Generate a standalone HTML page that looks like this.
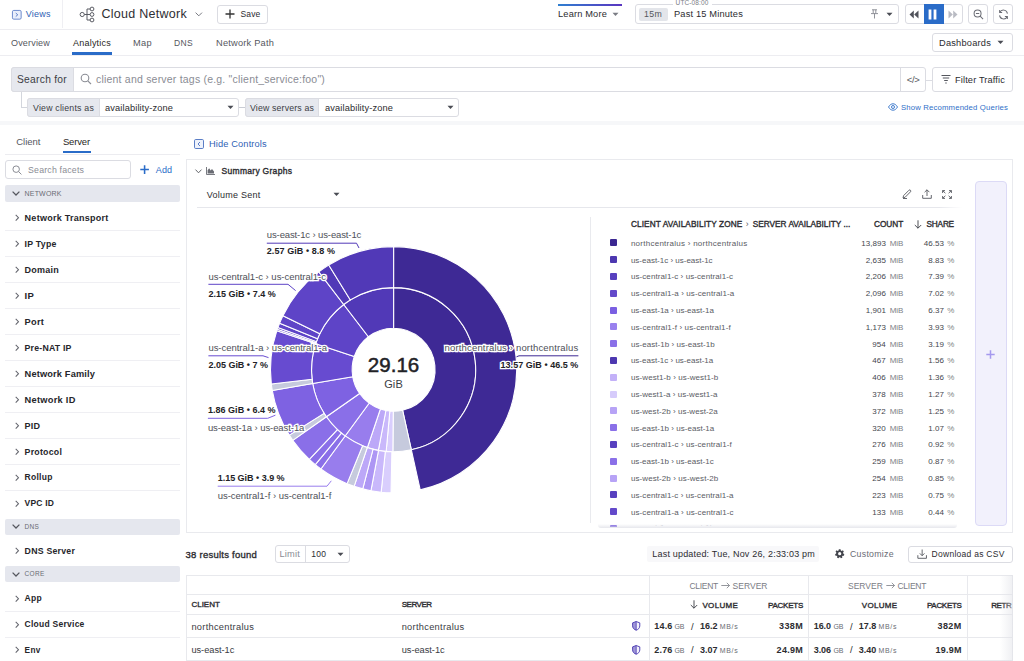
<!DOCTYPE html>
<html lang="en"><head><meta charset="utf-8"><title>Cloud Network - Analytics</title>
<style>
html,body{margin:0;padding:0;}
body{width:1024px;height:661px;overflow:hidden;position:relative;background:#fff;font-family:"Liberation Sans",sans-serif;}
.t{position:absolute;white-space:nowrap;}
.b{position:absolute;box-sizing:border-box;}
svg{position:absolute;overflow:visible;}
.halo{-webkit-text-stroke:2.6px #fff;paint-order:stroke fill;stroke-linejoin:round;}
</style></head><body>
<header>
<div class="b" style="left:0px;top:28.8px;width:1024px;height:1px;background:#ededf1;"></div>
<svg style="left:11.6px;top:9.5px" width="9.6" height="9.6" viewBox="0 0 11 11"><rect x="0.5" y="0.5" width="10" height="10" rx="1.5" fill="#e9eefb" stroke="#5b7cc6" stroke-width="1"/><path d="M4.3 3.5 L6.6 5.5 L4.3 7.5" fill="none" stroke="#4a6fc0" stroke-width="1"/></svg>
<span class="t " style="left:25.8px;top:9.0px;font-size:9px;line-height:10px;color:#2f5fb5;letter-spacing:0.231px;">Views</span>
<div class="b" style="left:62px;top:0px;width:1px;height:28px;background:#efeff3;"></div>
<svg style="left:79px;top:6px" width="17" height="17" viewBox="0 0 17 17" fill="none" stroke="#5a5c64" stroke-width="1"><circle cx="3.2" cy="8.5" r="2.1"/><circle cx="13" cy="3" r="1.9"/><circle cx="13" cy="8.5" r="1.9"/><circle cx="13" cy="14" r="1.9"/><path d="M5.3 8.5H11.1M8 8.5V3H11.1M8 8.5V14H11.1"/></svg>
<span class="t " style="left:101.4px;top:7.0px;font-size:12.5px;line-height:14px;color:#2e2e33;letter-spacing:0.279px;">Cloud Network</span>
<svg style="left:195.4px;top:12px" width="7.6" height="4.6" viewBox="0 0 10 6"><path d="M0.8 0.8 L5 5 L9.2 0.8" fill="none" stroke="#6a6c74" stroke-width="1.2"/></svg>
<div class="b" style="left:217px;top:4.5px;width:51px;height:19px;border:1px solid #dbdce2;border-radius:3px;background:#fff;"></div>
<svg style="left:225px;top:9px" width="10" height="10" viewBox="0 0 10 10"><path d="M5 0.5V9.5M0.5 5H9.5" stroke="#333" stroke-width="1.3"/></svg>
<span class="t " style="left:240.5px;top:9.0px;font-size:8.5px;line-height:10px;color:#2c2c30;letter-spacing:0.157px;">Save</span>
<div class="b" style="left:558px;top:4px;width:64px;height:2px;background:linear-gradient(90deg,#2f7fd0,#5a35c0);"></div>
<span class="t " style="left:558.0px;top:9.0px;font-size:9.25px;line-height:10px;color:#2c2c30;letter-spacing:0.170px;">Learn More</span>
<svg style="left:611px;top:12px" width="9" height="5" viewBox="0 0 9 5"><path d="M1.5 0.7H7.5L4.5 4.1Z" fill="#7a7c84"/></svg>
<div class="b" style="left:635px;top:4px;width:264px;height:20px;border:1px solid #dbdce2;border-radius:3px;background:#fff;"></div>
<div class="b" style="left:639px;top:7.5px;width:29px;height:13px;background:#e3e5ea;border-radius:2px;"></div>
<span class="t " style="left:644.0px;top:9.0px;font-size:8.75px;line-height:10px;color:#55575e;letter-spacing:0.327px;">15m</span>
<div class="b" style="left:672.5px;top:1px;width:39px;height:6px;background:#fff;"></div>
<span class="t " style="left:675.6px;top:-1.0px;font-size:6.5px;line-height:7px;color:#7b7d85;letter-spacing:0.112px;">UTC-08:00</span>
<span class="t " style="left:674.0px;top:9.0px;font-size:9.25px;line-height:10px;color:#2c2c30;letter-spacing:0.178px;">Past 15 Minutes</span>
<svg style="left:869.5px;top:9.3px" width="9" height="10" viewBox="0 0 9 10" fill="none" stroke="#85878f" stroke-width="0.9"><path d="M2 0.8H7M3.2 0.8V4.3M5.8 0.8V4.3M1 4.6H8M4.5 4.6V9.5"/></svg>
<svg style="left:885px;top:12px" width="9" height="5" viewBox="0 0 9 5"><path d="M1.5 0.7H7.5L4.5 4.1Z" fill="#4a4c54"/></svg>
<div class="b" style="left:904.5px;top:4px;width:58px;height:20px;border:1px solid #dbdce2;border-radius:3px;background:#fff;"></div>
<div class="b" style="left:924px;top:4px;width:19.5px;height:20px;background:#2a6cc8;"></div>
<svg style="left:909px;top:10px" width="10" height="9" viewBox="0 0 10 9"><path d="M4.8 0.5V8.5L0.5 4.5ZM9.5 0.5V8.5L5.2 4.5Z" fill="#50525a"/></svg>
<svg style="left:928px;top:9px" width="9" height="11" viewBox="0 0 9 11"><rect x="0.6" y="0.5" width="2.8" height="10" fill="#fff"/><rect x="5.6" y="0.5" width="2.8" height="10" fill="#fff"/></svg>
<svg style="left:948px;top:10px" width="10" height="9" viewBox="0 0 10 9"><path d="M0.5 0.5V8.5L4.8 4.5ZM5.2 0.5V8.5L9.5 4.5Z" fill="#b9bbc3"/></svg>
<div class="b" style="left:968.2px;top:4px;width:19.5px;height:20px;border:1px solid #dbdce2;border-radius:3px;background:#fff;"></div>
<svg style="left:972.5px;top:9px" width="11" height="11" viewBox="0 0 12 12" fill="none" stroke="#6a6c74" stroke-width="1.1"><circle cx="5" cy="5" r="3.8"/><path d="M3.2 5H6.8M7.8 7.8L11 11"/></svg>
<div class="b" style="left:993.2px;top:4px;width:19.5px;height:20px;border:1px solid #dbdce2;border-radius:3px;background:#fff;"></div>
<svg style="left:997.5px;top:8.8px" width="11" height="11" viewBox="0 0 12 12" fill="none" stroke="#6a6c74" stroke-width="1.1"><path d="M10.3 5A4.4 4.4 0 0 0 2 3.6M1.7 7A4.4 4.4 0 0 0 10 8.4"/><path d="M1.8 1.2V3.9H4.5M10.2 10.8V8.1H7.5"/></svg>
</header><nav>
<span class="t " style="left:11.0px;top:38.0px;font-size:9px;line-height:10px;color:#55575e;letter-spacing:0.187px;">Overview</span>
<span class="t " style="left:73.0px;top:38.0px;font-size:9px;line-height:10px;color:#1f1f24;letter-spacing:0.221px;">Analytics</span>
<div class="b" style="left:72px;top:52px;width:39.5px;height:2.5px;background:#2a6cc8;"></div>
<span class="t " style="left:133.0px;top:38.0px;font-size:9.25px;line-height:10px;color:#55575e;letter-spacing:0.336px;">Map</span>
<span class="t " style="left:174.0px;top:38.0px;font-size:8.5px;line-height:10px;color:#55575e;letter-spacing:0.351px;">DNS</span>
<span class="t " style="left:216.0px;top:38.0px;font-size:9.25px;line-height:10px;color:#55575e;letter-spacing:0.207px;">Network Path</span>
<div class="b" style="left:0px;top:54.8px;width:1024px;height:1px;background:#ededf1;"></div>
<div class="b" style="left:931.5px;top:33px;width:81.5px;height:18.5px;border:1px solid #dbdce2;border-radius:3px;background:#fff;"></div>
<span class="t " style="left:939.0px;top:38.0px;font-size:9.25px;line-height:10px;color:#2c2c30;letter-spacing:0.213px;">Dashboards</span>
<svg style="left:996px;top:40px" width="9" height="5" viewBox="0 0 9 5"><path d="M1.5 0.7H7.5L4.5 4.1Z" fill="#4a4c54"/></svg>
</nav><section class="search">
<div class="b" style="left:11px;top:66.5px;width:915px;height:25.5px;border:1px solid #dbdce2;border-radius:3px;background:#fff;"></div>
<div class="b" style="left:11px;top:66.5px;width:63px;height:25.5px;background:#e6e8ee;border:1px solid #dbdce2;border-radius:3px 0 0 3px;"></div>
<span class="t " style="left:17.0px;top:74.0px;font-size:10.25px;line-height:11px;color:#3a3c44;letter-spacing:0.271px;">Search for</span>
<svg style="left:80px;top:73.3px" width="12" height="12" viewBox="0 0 12 12" fill="none" stroke="#8a8c94" stroke-width="1.1"><circle cx="5" cy="5" r="3.8"/><path d="M7.8 7.8L11 11"/></svg>
<span class="t " style="left:96.0px;top:73.0px;font-size:10.5px;line-height:12px;color:#8a8c94;letter-spacing:0.206px;">client and server tags (e.g. "client_service:foo")</span>
<div class="b" style="left:900px;top:66.5px;width:1px;height:25.5px;background:#dbdce2;"></div>
<span class="t " style="left:906.8px;top:74.0px;font-size:9.5px;line-height:11px;color:#55575e;letter-spacing:-0.312px;">&lt;/&gt;</span>
<div class="b" style="left:926px;top:79.5px;width:6px;height:1px;background:#dbdce2;"></div>
<div class="b" style="left:932px;top:66.5px;width:81px;height:25.5px;border:1px solid #dbdce2;border-radius:3px;background:#fff;"></div>
<svg style="left:941px;top:74.4px" width="10" height="10" viewBox="0 0 10 10" stroke="#55575e" stroke-width="1"><path d="M0.5 1.5H9.5M1.8 4H8.2M3.2 6.5H6.8M4.3 9H5.7"/></svg>
<span class="t " style="left:955.0px;top:75.0px;font-size:9.25px;line-height:10px;color:#2c2c30;letter-spacing:0.133px;">Filter Traffic</span>
<div class="b" style="left:20.5px;top:92px;width:1px;height:15.5px;background:#d3d6dd;"></div>
<div class="b" style="left:20.5px;top:107px;width:7px;height:1px;background:#d3d6dd;"></div>
<div class="b" style="left:27px;top:98px;width:212px;height:19px;border:1px solid #dbdce2;border-radius:3px;background:#fff;"></div>
<div class="b" style="left:27px;top:98px;width:73px;height:19px;background:#e6e8ee;border:1px solid #dbdce2;border-radius:3px 0 0 3px;"></div>
<span class="t " style="left:33.0px;top:103.0px;font-size:8.75px;line-height:10px;color:#3a3c44;letter-spacing:0.219px;">View clients as</span>
<span class="t " style="left:105.0px;top:103.0px;font-size:9.25px;line-height:10px;color:#2c2c30;letter-spacing:0.129px;">availability-zone</span>
<svg style="left:226px;top:105px" width="9" height="5" viewBox="0 0 9 5"><path d="M1.5 0.7H7.5L4.5 4.1Z" fill="#4a4c54"/></svg>
<div class="b" style="left:239px;top:107px;width:6px;height:1px;background:#c9ccd4;"></div>
<div class="b" style="left:245px;top:98px;width:214px;height:19px;border:1px solid #dbdce2;border-radius:3px;background:#fff;"></div>
<div class="b" style="left:245px;top:98px;width:74px;height:19px;background:#e6e8ee;border:1px solid #dbdce2;border-radius:3px 0 0 3px;"></div>
<span class="t " style="left:250.0px;top:103.0px;font-size:8.75px;line-height:10px;color:#3a3c44;letter-spacing:0.160px;">View servers as</span>
<span class="t " style="left:325.0px;top:103.0px;font-size:9.25px;line-height:10px;color:#2c2c30;letter-spacing:0.129px;">availability-zone</span>
<svg style="left:446px;top:105px" width="9" height="5" viewBox="0 0 9 5"><path d="M1.5 0.7H7.5L4.5 4.1Z" fill="#4a4c54"/></svg>
<svg style="left:888px;top:103px" width="10" height="8" viewBox="0 0 10 8" fill="none" stroke="#2f6fc8" stroke-width="0.9"><path d="M0.5 4C2 1.5 3.5 0.8 5 0.8S8 1.5 9.5 4C8 6.5 6.5 7.2 5 7.2S2 6.5 0.5 4Z"/><circle cx="5" cy="4" r="1.5"/></svg>
<span class="t " style="left:901.0px;top:103.0px;font-size:7.75px;line-height:9px;color:#2f6fc8;letter-spacing:0.150px;">Show Recommended Queries</span>
<div class="b" style="left:0px;top:120.5px;width:1024px;height:4.5px;background:#f6f7f9;"></div>
</section><aside>
<span class="t " style="left:16.3px;top:136.0px;font-size:9.5px;line-height:11px;color:#55575e;letter-spacing:-0.048px;">Client</span>
<span class="t " style="left:62.9px;top:136.0px;font-size:9.5px;line-height:11px;color:#1f1f24;letter-spacing:-0.147px;">Server</span>
<div class="b" style="left:62.5px;top:151px;width:28.5px;height:2.2px;background:#2a6cc8;"></div>
<div class="b" style="left:5px;top:154px;width:175px;height:1px;background:#ececf0;"></div>
<div class="b" style="left:5.3px;top:160.4px;width:126px;height:18.8px;border:1px solid #dbdce2;border-radius:3px;background:#fff;"></div>
<svg style="left:12px;top:165px" width="10" height="10" viewBox="0 0 12 12" fill="none" stroke="#8a8c94" stroke-width="1.2"><circle cx="5" cy="5" r="3.9"/><path d="M7.8 7.8L11.3 11.3"/></svg>
<span class="t " style="left:28.1px;top:165.0px;font-size:8.75px;line-height:10px;color:#8a8c94;letter-spacing:0.193px;">Search facets</span>
<svg style="left:140.4px;top:165.4px" width="9.2" height="9.2" viewBox="0 0 10 10"><path d="M5 0.3V9.7M0.3 5H9.7" stroke="#2a6cc8" stroke-width="1.7"/></svg>
<span class="t " style="left:155.7px;top:165.0px;font-size:9px;line-height:10px;color:#2a6cc8;letter-spacing:0.196px;">Add</span>
<div class="b" style="left:5px;top:185.4px;width:175px;height:16.4px;background:#e5e7ee;border-radius:2px;"></div>
<svg style="left:12.2px;top:191.2px" width="8" height="5" viewBox="0 0 8 5"><path d="M0.6 0.6L4 4L7.4 0.6" fill="none" stroke="#55575e" stroke-width="1.25"/></svg>
<span class="t " style="left:24.6px;top:190.0px;font-size:7px;line-height:7px;color:#6a6c74;letter-spacing:0.175px;">NETWORK</span>
<svg style="left:14.5px;top:213.7px" width="4.4" height="7.4" viewBox="0 0 5 8"><path d="M0.8 0.7L4 4L0.8 7.3" fill="none" stroke="#62646c" stroke-width="1.15"/></svg>
<span class="t " style="left:24.6px;top:213.0px;font-size:9px;line-height:10px;color:#26262b;font-weight:700;letter-spacing:0.264px;">Network Transport</span>
<div class="b" style="left:5px;top:229.7px;width:175px;height:1px;background:#efeff3;"></div>
<svg style="left:14.5px;top:239.7px" width="4.4" height="7.4" viewBox="0 0 5 8"><path d="M0.8 0.7L4 4L0.8 7.3" fill="none" stroke="#62646c" stroke-width="1.15"/></svg>
<span class="t " style="left:24.6px;top:239.0px;font-size:8.75px;line-height:10px;color:#26262b;font-weight:700;letter-spacing:0.241px;">IP Type</span>
<div class="b" style="left:5px;top:255.7px;width:175px;height:1px;background:#efeff3;"></div>
<svg style="left:14.5px;top:265.7px" width="4.4" height="7.4" viewBox="0 0 5 8"><path d="M0.8 0.7L4 4L0.8 7.3" fill="none" stroke="#62646c" stroke-width="1.15"/></svg>
<span class="t " style="left:24.6px;top:265.0px;font-size:9px;line-height:10px;color:#26262b;font-weight:700;letter-spacing:0.250px;">Domain</span>
<div class="b" style="left:5px;top:281.7px;width:175px;height:1px;background:#efeff3;"></div>
<svg style="left:14.5px;top:291.7px" width="4.4" height="7.4" viewBox="0 0 5 8"><path d="M0.8 0.7L4 4L0.8 7.3" fill="none" stroke="#62646c" stroke-width="1.15"/></svg>
<span class="t " style="left:24.6px;top:290.0px;font-size:9.5px;line-height:11px;color:#26262b;font-weight:700;letter-spacing:0.263px;">IP</span>
<div class="b" style="left:5px;top:307.7px;width:175px;height:1px;background:#efeff3;"></div>
<svg style="left:14.5px;top:317.7px" width="4.4" height="7.4" viewBox="0 0 5 8"><path d="M0.8 0.7L4 4L0.8 7.3" fill="none" stroke="#62646c" stroke-width="1.15"/></svg>
<span class="t " style="left:24.6px;top:317.0px;font-size:9.25px;line-height:10px;color:#26262b;font-weight:700;letter-spacing:0.250px;">Port</span>
<div class="b" style="left:5px;top:333.7px;width:175px;height:1px;background:#efeff3;"></div>
<svg style="left:14.5px;top:343.7px" width="4.4" height="7.4" viewBox="0 0 5 8"><path d="M0.8 0.7L4 4L0.8 7.3" fill="none" stroke="#62646c" stroke-width="1.15"/></svg>
<span class="t " style="left:24.6px;top:343.0px;font-size:8.75px;line-height:10px;color:#26262b;font-weight:700;letter-spacing:0.195px;">Pre-NAT IP</span>
<div class="b" style="left:5px;top:359.7px;width:175px;height:1px;background:#efeff3;"></div>
<svg style="left:14.5px;top:369.7px" width="4.4" height="7.4" viewBox="0 0 5 8"><path d="M0.8 0.7L4 4L0.8 7.3" fill="none" stroke="#62646c" stroke-width="1.15"/></svg>
<span class="t " style="left:24.6px;top:369.0px;font-size:9.25px;line-height:10px;color:#26262b;font-weight:700;letter-spacing:0.152px;">Network Family</span>
<div class="b" style="left:5px;top:385.7px;width:175px;height:1px;background:#efeff3;"></div>
<svg style="left:14.5px;top:395.7px" width="4.4" height="7.4" viewBox="0 0 5 8"><path d="M0.8 0.7L4 4L0.8 7.3" fill="none" stroke="#62646c" stroke-width="1.15"/></svg>
<span class="t " style="left:24.6px;top:395.0px;font-size:9.25px;line-height:10px;color:#26262b;font-weight:700;letter-spacing:0.269px;">Network ID</span>
<div class="b" style="left:5px;top:411.7px;width:175px;height:1px;background:#efeff3;"></div>
<svg style="left:14.5px;top:421.7px" width="4.4" height="7.4" viewBox="0 0 5 8"><path d="M0.8 0.7L4 4L0.8 7.3" fill="none" stroke="#62646c" stroke-width="1.15"/></svg>
<span class="t " style="left:24.6px;top:421.0px;font-size:9px;line-height:10px;color:#26262b;font-weight:700;letter-spacing:0.166px;">PID</span>
<div class="b" style="left:5px;top:437.7px;width:175px;height:1px;background:#efeff3;"></div>
<svg style="left:14.5px;top:447.7px" width="4.4" height="7.4" viewBox="0 0 5 8"><path d="M0.8 0.7L4 4L0.8 7.3" fill="none" stroke="#62646c" stroke-width="1.15"/></svg>
<span class="t " style="left:24.6px;top:447.0px;font-size:8.75px;line-height:10px;color:#26262b;font-weight:700;letter-spacing:0.252px;">Protocol</span>
<div class="b" style="left:5px;top:463.7px;width:175px;height:1px;background:#efeff3;"></div>
<svg style="left:14.5px;top:473.7px" width="4.4" height="7.4" viewBox="0 0 5 8"><path d="M0.8 0.7L4 4L0.8 7.3" fill="none" stroke="#62646c" stroke-width="1.15"/></svg>
<span class="t " style="left:24.6px;top:472.0px;font-size:8.5px;line-height:10px;color:#26262b;font-weight:700;letter-spacing:0.260px;">Rollup</span>
<div class="b" style="left:5px;top:489.7px;width:175px;height:1px;background:#efeff3;"></div>
<svg style="left:14.5px;top:499.7px" width="4.4" height="7.4" viewBox="0 0 5 8"><path d="M0.8 0.7L4 4L0.8 7.3" fill="none" stroke="#62646c" stroke-width="1.15"/></svg>
<span class="t " style="left:24.6px;top:498.0px;font-size:8.5px;line-height:10px;color:#26262b;font-weight:700;letter-spacing:0.194px;">VPC ID</span>
<div class="b" style="left:5px;top:518.6px;width:175px;height:16px;background:#e5e7ee;border-radius:2px;"></div>
<svg style="left:12.2px;top:524.2px" width="8" height="5" viewBox="0 0 8 5"><path d="M0.6 0.6L4 4L7.4 0.6" fill="none" stroke="#55575e" stroke-width="1.25"/></svg>
<span class="t " style="left:24.6px;top:523.0px;font-size:6.5px;line-height:7px;color:#6a6c74;letter-spacing:0.259px;">DNS</span>
<svg style="left:14.5px;top:546.7px" width="4.4" height="7.4" viewBox="0 0 5 8"><path d="M0.8 0.7L4 4L0.8 7.3" fill="none" stroke="#62646c" stroke-width="1.15"/></svg>
<span class="t " style="left:24.6px;top:546.0px;font-size:8.75px;line-height:10px;color:#26262b;font-weight:700;letter-spacing:0.235px;">DNS Server</span>
<div class="b" style="left:5px;top:566px;width:175px;height:15.9px;background:#e5e7ee;border-radius:2px;"></div>
<svg style="left:12.2px;top:571.6px" width="8" height="5" viewBox="0 0 8 5"><path d="M0.6 0.6L4 4L7.4 0.6" fill="none" stroke="#55575e" stroke-width="1.25"/></svg>
<span class="t " style="left:24.6px;top:570.0px;font-size:6.5px;line-height:7px;color:#6a6c74;letter-spacing:0.305px;">CORE</span>
<svg style="left:14.5px;top:594.7px" width="4.4" height="7.4" viewBox="0 0 5 8"><path d="M0.8 0.7L4 4L0.8 7.3" fill="none" stroke="#62646c" stroke-width="1.15"/></svg>
<span class="t " style="left:24.6px;top:593.0px;font-size:8.5px;line-height:10px;color:#26262b;font-weight:700;letter-spacing:0.326px;">App</span>
<div class="b" style="left:5px;top:610.7px;width:175px;height:1px;background:#efeff3;"></div>
<svg style="left:14.5px;top:620.6px" width="4.4" height="7.4" viewBox="0 0 5 8"><path d="M0.8 0.7L4 4L0.8 7.3" fill="none" stroke="#62646c" stroke-width="1.15"/></svg>
<span class="t " style="left:24.6px;top:619.0px;font-size:8.5px;line-height:10px;color:#26262b;font-weight:700;letter-spacing:0.255px;">Cloud Service</span>
<div class="b" style="left:5px;top:636.6px;width:175px;height:1px;background:#efeff3;"></div>
<svg style="left:14.5px;top:646.4px" width="4.4" height="7.4" viewBox="0 0 5 8"><path d="M0.8 0.7L4 4L0.8 7.3" fill="none" stroke="#62646c" stroke-width="1.15"/></svg>
<span class="t " style="left:24.6px;top:646.0px;font-size:8.25px;line-height:9px;color:#26262b;font-weight:700;letter-spacing:0.290px;">Env</span>
</aside><main><section class="summary">
<svg style="left:194px;top:139px" width="10" height="10" viewBox="0 0 10 10" fill="none" stroke="#4a6fc0" stroke-width="0.9"><rect x="0.5" y="0.5" width="9" height="9" rx="1.2" fill="#eef2fb"/><path d="M6 3L4 5L6 7"/></svg>
<span class="t " style="left:209.0px;top:139.0px;font-size:9.25px;line-height:10px;color:#2f5fb5;letter-spacing:0.136px;">Hide Controls</span>
<div class="b" style="left:186px;top:159px;width:827px;height:374px;border:1px solid #e9eaee;background:#fff;"></div>
<svg style="left:194.7px;top:168.6px" width="7" height="5" viewBox="0 0 7 5"><path d="M0.5 0.6L3.5 3.8L6.5 0.6" fill="none" stroke="#55575e" stroke-width="0.9"/></svg>
<svg style="left:206px;top:166.5px" width="9" height="8" viewBox="0 0 9 8"><path d="M0.5 0V7.5H9" fill="none" stroke="#6a6c74" stroke-width="0.9"/><path d="M1.6 6.6V3.2L3.2 1.2L4.6 3.4L6 2L8 4.4V6.6Z" fill="#6a6c74"/></svg>
<span class="t " style="left:221.6px;top:166.0px;font-size:8.5px;line-height:10px;color:#2c2c30;letter-spacing:0.286px;-webkit-text-stroke:0.35px #2c2c30;">Summary Graphs</span>
<span class="t " style="left:206.7px;top:190.0px;font-size:9px;line-height:10px;color:#2c2c30;letter-spacing:0.252px;">Volume Sent</span>
<svg style="left:331.5px;top:192.3px" width="9" height="5" viewBox="0 0 9 5"><path d="M1.5 0.7H7.5L4.5 4.1Z" fill="#4a4c54"/></svg>
<div class="b" style="left:196.5px;top:206.8px;width:765px;height:1px;background:linear-gradient(90deg,#e6e7ec 97%,rgba(230,231,236,0));"></div>
<div class="b" style="left:590px;top:217px;width:1px;height:306px;background:#e9eaee;"></div>
<svg style="left:902px;top:189px" width="10" height="10" viewBox="0 0 10 10" fill="none" stroke="#55575e" stroke-width="0.9"><path d="M1 9L1.6 6.6L7 1.2Q7.8 0.5 8.5 1.3Q9.2 2 8.5 2.8L3.2 8.2ZM1 9.5H5"/></svg>
<svg style="left:921.5px;top:189px" width="10" height="10" viewBox="0 0 10 10" fill="none" stroke="#55575e" stroke-width="0.9"><path d="M0.7 6V9.3H9.3V6M5 7V0.8M2.6 3.2L5 0.8L7.4 3.2"/></svg>
<svg style="left:941.5px;top:189.5px" width="10" height="9" viewBox="0 0 10 9" fill="none" stroke="#55575e" stroke-width="0.9"><path d="M0.6 3V0.6H3M0.6 0.6L3.4 3.2M9.4 3V0.6H7M9.4 0.6L6.6 3.2M0.6 6V8.4H3M0.6 8.4L3.4 5.8M9.4 6V8.4H7M9.4 8.4L6.6 5.8"/></svg>
<div class="b" style="left:975.3px;top:181.3px;width:32px;height:345px;background:#f2f1fc;border:1px solid #dcdaf6;border-radius:4px;"></div>
<svg style="left:986.3px;top:349.6px" width="9" height="9" viewBox="0 0 9 9"><path d="M4.5 0.3V8.7M0.3 4.5H8.7" stroke="#a599ee" stroke-width="1.5"/></svg>
<span class="t " style="left:630.9px;top:220.0px;font-size:8.25px;line-height:9px;color:#2c2c30;letter-spacing:0.105px;-webkit-text-stroke:0.35px #2c2c30;">CLIENT AVAILABILITY ZONE</span>
<span class="t " style="left:745.8px;top:219.0px;font-size:8.5px;line-height:10px;color:#55575e;">›</span>
<span class="t " style="left:752.8px;top:220.0px;font-size:8.25px;line-height:9px;color:#2c2c30;letter-spacing:-0.001px;-webkit-text-stroke:0.35px #2c2c30;">SERVER AVAILABILITY ...</span>
<span class="t " style="left:874.0px;top:220.0px;font-size:8.25px;line-height:9px;color:#2c2c30;letter-spacing:-0.006px;-webkit-text-stroke:0.35px #2c2c30;">COUNT</span>
<svg style="left:914px;top:219.5px" width="8" height="9" viewBox="0 0 8 9" fill="none" stroke="#3a3c44" stroke-width="0.9"><path d="M4 0.3V8.2M0.8 5L4 8.2L7.2 5"/></svg>
<span class="t " style="left:926.6px;top:220.0px;font-size:8.25px;line-height:9px;color:#2c2c30;letter-spacing:-0.225px;-webkit-text-stroke:0.35px #2c2c30;">SHARE</span>
<div class="b" style="left:610px;top:239.4px;width:7.2px;height:7px;background:#3b2791;border-radius:1px;"></div>
<span class="t " style="left:630.9px;top:239.0px;font-size:8px;line-height:9px;color:#5a5c64;letter-spacing:0.262px;">northcentralus › northcentralus</span>
<span class="t " style="left:861.2px;top:239.0px;font-size:8px;line-height:9px;color:#44464e;letter-spacing:0.040px;">13,893</span>
<span class="t " style="left:889.7px;top:239.0px;font-size:8px;line-height:9px;color:#7d7f87;letter-spacing:-0.059px;">MiB</span>
<span class="t " style="left:923.8px;top:239.0px;font-size:8px;line-height:9px;color:#44464e;letter-spacing:0.034px;">46.53</span>
<span class="t " style="left:947.3px;top:239.0px;font-size:8px;line-height:9px;color:#7d7f87;">%</span>
<div class="b" style="left:610px;top:256.2px;width:7.2px;height:7px;background:#4d38b0;border-radius:1px;"></div>
<span class="t " style="left:630.9px;top:256.0px;font-size:8px;line-height:9px;color:#5a5c64;letter-spacing:-0.004px;">us-east-1c › us-east-1c</span>
<span class="t " style="left:865.7px;top:256.0px;font-size:8px;line-height:9px;color:#44464e;letter-spacing:0.034px;">2,635</span>
<span class="t " style="left:889.7px;top:256.0px;font-size:8px;line-height:9px;color:#7d7f87;letter-spacing:-0.059px;">MiB</span>
<span class="t " style="left:928.3px;top:256.0px;font-size:8px;line-height:9px;color:#44464e;letter-spacing:0.025px;">8.83</span>
<span class="t " style="left:947.3px;top:256.0px;font-size:8px;line-height:9px;color:#7d7f87;">%</span>
<div class="b" style="left:610px;top:273px;width:7.2px;height:7px;background:#5840bf;border-radius:1px;"></div>
<span class="t " style="left:630.9px;top:272.0px;font-size:8px;line-height:9px;color:#5a5c64;letter-spacing:0.087px;">us-central1-c › us-central1-c</span>
<span class="t " style="left:865.7px;top:272.0px;font-size:8px;line-height:9px;color:#44464e;letter-spacing:0.034px;">2,206</span>
<span class="t " style="left:889.7px;top:272.0px;font-size:8px;line-height:9px;color:#7d7f87;letter-spacing:-0.059px;">MiB</span>
<span class="t " style="left:928.3px;top:272.0px;font-size:8px;line-height:9px;color:#44464e;letter-spacing:0.025px;">7.39</span>
<span class="t " style="left:947.3px;top:272.0px;font-size:8px;line-height:9px;color:#7d7f87;">%</span>
<div class="b" style="left:610px;top:289.8px;width:7.2px;height:7px;background:#6349ca;border-radius:1px;"></div>
<span class="t " style="left:630.9px;top:289.0px;font-size:8px;line-height:9px;color:#5a5c64;letter-spacing:0.100px;">us-central1-a › us-central1-a</span>
<span class="t " style="left:865.7px;top:289.0px;font-size:8px;line-height:9px;color:#44464e;letter-spacing:0.034px;">2,096</span>
<span class="t " style="left:889.7px;top:289.0px;font-size:8px;line-height:9px;color:#7d7f87;letter-spacing:-0.059px;">MiB</span>
<span class="t " style="left:928.3px;top:289.0px;font-size:8px;line-height:9px;color:#44464e;letter-spacing:0.025px;">7.02</span>
<span class="t " style="left:947.3px;top:289.0px;font-size:8px;line-height:9px;color:#7d7f87;">%</span>
<div class="b" style="left:610px;top:306.6px;width:7.2px;height:7px;background:#7a5fe2;border-radius:1px;"></div>
<span class="t " style="left:630.9px;top:306.0px;font-size:8px;line-height:9px;color:#5a5c64;letter-spacing:0.013px;">us-east-1a › us-east-1a</span>
<span class="t " style="left:865.7px;top:306.0px;font-size:8px;line-height:9px;color:#44464e;letter-spacing:0.034px;">1,901</span>
<span class="t " style="left:889.7px;top:306.0px;font-size:8px;line-height:9px;color:#7d7f87;letter-spacing:-0.059px;">MiB</span>
<span class="t " style="left:928.3px;top:306.0px;font-size:8px;line-height:9px;color:#44464e;letter-spacing:0.025px;">6.37</span>
<span class="t " style="left:947.3px;top:306.0px;font-size:8px;line-height:9px;color:#7d7f87;">%</span>
<div class="b" style="left:610px;top:323.4px;width:7.2px;height:7px;background:#9981ee;border-radius:1px;"></div>
<span class="t " style="left:630.9px;top:323.0px;font-size:8px;line-height:9px;color:#5a5c64;letter-spacing:0.135px;">us-central1-f › us-central1-f</span>
<span class="t " style="left:865.7px;top:323.0px;font-size:8px;line-height:9px;color:#44464e;letter-spacing:0.034px;">1,173</span>
<span class="t " style="left:889.7px;top:323.0px;font-size:8px;line-height:9px;color:#7d7f87;letter-spacing:-0.059px;">MiB</span>
<span class="t " style="left:928.3px;top:323.0px;font-size:8px;line-height:9px;color:#44464e;letter-spacing:0.025px;">3.93</span>
<span class="t " style="left:947.3px;top:323.0px;font-size:8px;line-height:9px;color:#7d7f87;">%</span>
<div class="b" style="left:610px;top:340.2px;width:7.2px;height:7px;background:#8a70e8;border-radius:1px;"></div>
<span class="t " style="left:630.9px;top:340.0px;font-size:8px;line-height:9px;color:#5a5c64;letter-spacing:0.050px;">us-east-1b › us-east-1b</span>
<span class="t " style="left:872.3px;top:340.0px;font-size:8px;line-height:9px;color:#44464e;letter-spacing:0.069px;">954</span>
<span class="t " style="left:889.7px;top:340.0px;font-size:8px;line-height:9px;color:#7d7f87;letter-spacing:-0.059px;">MiB</span>
<span class="t " style="left:928.3px;top:340.0px;font-size:8px;line-height:9px;color:#44464e;letter-spacing:0.025px;">3.19</span>
<span class="t " style="left:947.3px;top:340.0px;font-size:8px;line-height:9px;color:#7d7f87;">%</span>
<div class="b" style="left:610px;top:357px;width:7.2px;height:7px;background:#4d38b0;border-radius:1px;"></div>
<span class="t " style="left:630.9px;top:356.0px;font-size:8px;line-height:9px;color:#5a5c64;letter-spacing:0.005px;">us-east-1c › us-east-1a</span>
<span class="t " style="left:872.3px;top:356.0px;font-size:8px;line-height:9px;color:#44464e;letter-spacing:0.069px;">467</span>
<span class="t " style="left:889.7px;top:356.0px;font-size:8px;line-height:9px;color:#7d7f87;letter-spacing:-0.059px;">MiB</span>
<span class="t " style="left:928.3px;top:356.0px;font-size:8px;line-height:9px;color:#44464e;letter-spacing:0.025px;">1.56</span>
<span class="t " style="left:947.3px;top:356.0px;font-size:8px;line-height:9px;color:#7d7f87;">%</span>
<div class="b" style="left:610px;top:373.8px;width:7.2px;height:7px;background:#c3b1f8;border-radius:1px;"></div>
<span class="t " style="left:630.9px;top:373.0px;font-size:8px;line-height:9px;color:#5a5c64;letter-spacing:0.089px;">us-west1-b › us-west1-b</span>
<span class="t " style="left:872.3px;top:373.0px;font-size:8px;line-height:9px;color:#44464e;letter-spacing:0.069px;">406</span>
<span class="t " style="left:889.7px;top:373.0px;font-size:8px;line-height:9px;color:#7d7f87;letter-spacing:-0.059px;">MiB</span>
<span class="t " style="left:928.3px;top:373.0px;font-size:8px;line-height:9px;color:#44464e;letter-spacing:0.025px;">1.36</span>
<span class="t " style="left:947.3px;top:373.0px;font-size:8px;line-height:9px;color:#7d7f87;">%</span>
<div class="b" style="left:610px;top:390.6px;width:7.2px;height:7px;background:#d6cbfb;border-radius:1px;"></div>
<span class="t " style="left:630.9px;top:390.0px;font-size:8px;line-height:9px;color:#5a5c64;letter-spacing:0.052px;">us-west1-a › us-west1-a</span>
<span class="t " style="left:872.3px;top:390.0px;font-size:8px;line-height:9px;color:#44464e;letter-spacing:0.069px;">378</span>
<span class="t " style="left:889.7px;top:390.0px;font-size:8px;line-height:9px;color:#7d7f87;letter-spacing:-0.059px;">MiB</span>
<span class="t " style="left:928.3px;top:390.0px;font-size:8px;line-height:9px;color:#44464e;letter-spacing:0.025px;">1.27</span>
<span class="t " style="left:947.3px;top:390.0px;font-size:8px;line-height:9px;color:#7d7f87;">%</span>
<div class="b" style="left:610px;top:407.4px;width:7.2px;height:7px;background:#b7a3f6;border-radius:1px;"></div>
<span class="t " style="left:630.9px;top:407.0px;font-size:8px;line-height:9px;color:#5a5c64;letter-spacing:0.071px;">us-west-2b › us-west-2a</span>
<span class="t " style="left:872.3px;top:407.0px;font-size:8px;line-height:9px;color:#44464e;letter-spacing:0.069px;">372</span>
<span class="t " style="left:889.7px;top:407.0px;font-size:8px;line-height:9px;color:#7d7f87;letter-spacing:-0.059px;">MiB</span>
<span class="t " style="left:928.3px;top:407.0px;font-size:8px;line-height:9px;color:#44464e;letter-spacing:0.025px;">1.25</span>
<span class="t " style="left:947.3px;top:407.0px;font-size:8px;line-height:9px;color:#7d7f87;">%</span>
<div class="b" style="left:610px;top:424.2px;width:7.2px;height:7px;background:#8a70e8;border-radius:1px;"></div>
<span class="t " style="left:630.9px;top:424.0px;font-size:8px;line-height:9px;color:#5a5c64;letter-spacing:0.032px;">us-east-1b › us-east-1a</span>
<span class="t " style="left:872.3px;top:424.0px;font-size:8px;line-height:9px;color:#44464e;letter-spacing:0.069px;">320</span>
<span class="t " style="left:889.7px;top:424.0px;font-size:8px;line-height:9px;color:#7d7f87;letter-spacing:-0.059px;">MiB</span>
<span class="t " style="left:928.3px;top:424.0px;font-size:8px;line-height:9px;color:#44464e;letter-spacing:0.025px;">1.07</span>
<span class="t " style="left:947.3px;top:424.0px;font-size:8px;line-height:9px;color:#7d7f87;">%</span>
<div class="b" style="left:610px;top:441px;width:7.2px;height:7px;background:#5840bf;border-radius:1px;"></div>
<span class="t " style="left:630.9px;top:440.0px;font-size:8px;line-height:9px;color:#5a5c64;letter-spacing:0.111px;">us-central1-c › us-central1-f</span>
<span class="t " style="left:872.3px;top:440.0px;font-size:8px;line-height:9px;color:#44464e;letter-spacing:0.069px;">276</span>
<span class="t " style="left:889.7px;top:440.0px;font-size:8px;line-height:9px;color:#7d7f87;letter-spacing:-0.059px;">MiB</span>
<span class="t " style="left:928.3px;top:440.0px;font-size:8px;line-height:9px;color:#44464e;letter-spacing:0.025px;">0.92</span>
<span class="t " style="left:947.3px;top:440.0px;font-size:8px;line-height:9px;color:#7d7f87;">%</span>
<div class="b" style="left:610px;top:457.8px;width:7.2px;height:7px;background:#8a70e8;border-radius:1px;"></div>
<span class="t " style="left:630.9px;top:457.0px;font-size:8px;line-height:9px;color:#5a5c64;letter-spacing:0.023px;">us-east-1b › us-east-1c</span>
<span class="t " style="left:872.3px;top:457.0px;font-size:8px;line-height:9px;color:#44464e;letter-spacing:0.069px;">259</span>
<span class="t " style="left:889.7px;top:457.0px;font-size:8px;line-height:9px;color:#7d7f87;letter-spacing:-0.059px;">MiB</span>
<span class="t " style="left:928.3px;top:457.0px;font-size:8px;line-height:9px;color:#44464e;letter-spacing:0.025px;">0.87</span>
<span class="t " style="left:947.3px;top:457.0px;font-size:8px;line-height:9px;color:#7d7f87;">%</span>
<div class="b" style="left:610px;top:474.6px;width:7.2px;height:7px;background:#b7a3f6;border-radius:1px;"></div>
<span class="t " style="left:630.9px;top:474.0px;font-size:8px;line-height:9px;color:#5a5c64;letter-spacing:0.089px;">us-west-2b › us-west-2b</span>
<span class="t " style="left:872.3px;top:474.0px;font-size:8px;line-height:9px;color:#44464e;letter-spacing:0.069px;">254</span>
<span class="t " style="left:889.7px;top:474.0px;font-size:8px;line-height:9px;color:#7d7f87;letter-spacing:-0.059px;">MiB</span>
<span class="t " style="left:928.3px;top:474.0px;font-size:8px;line-height:9px;color:#44464e;letter-spacing:0.025px;">0.85</span>
<span class="t " style="left:947.3px;top:474.0px;font-size:8px;line-height:9px;color:#7d7f87;">%</span>
<div class="b" style="left:610px;top:491.4px;width:7.2px;height:7px;background:#5840bf;border-radius:1px;"></div>
<span class="t " style="left:630.9px;top:491.0px;font-size:8px;line-height:9px;color:#5a5c64;letter-spacing:0.093px;">us-central1-c › us-central1-a</span>
<span class="t " style="left:872.3px;top:491.0px;font-size:8px;line-height:9px;color:#44464e;letter-spacing:0.069px;">223</span>
<span class="t " style="left:889.7px;top:491.0px;font-size:8px;line-height:9px;color:#7d7f87;letter-spacing:-0.059px;">MiB</span>
<span class="t " style="left:928.3px;top:491.0px;font-size:8px;line-height:9px;color:#44464e;letter-spacing:0.025px;">0.75</span>
<span class="t " style="left:947.3px;top:491.0px;font-size:8px;line-height:9px;color:#7d7f87;">%</span>
<div class="b" style="left:610px;top:508.2px;width:7.2px;height:7px;background:#6349ca;border-radius:1px;"></div>
<span class="t " style="left:630.9px;top:508.0px;font-size:8px;line-height:9px;color:#5a5c64;letter-spacing:0.093px;">us-central1-a › us-central1-c</span>
<span class="t " style="left:872.3px;top:508.0px;font-size:8px;line-height:9px;color:#44464e;letter-spacing:0.069px;">133</span>
<span class="t " style="left:889.7px;top:508.0px;font-size:8px;line-height:9px;color:#7d7f87;letter-spacing:-0.059px;">MiB</span>
<span class="t " style="left:928.3px;top:508.0px;font-size:8px;line-height:9px;color:#44464e;letter-spacing:0.025px;">0.44</span>
<span class="t " style="left:947.3px;top:508.0px;font-size:8px;line-height:9px;color:#7d7f87;">%</span>
<div class="b" style="left:610px;top:524.6px;width:7.2px;height:2.4px;background:#7a5fe2;border-radius:1px 1px 0 0;"></div>
<span class="t " style="left:630.9px;top:523.0px;font-size:8px;line-height:9px;color:#d5d6db;letter-spacing:0.032px;height:3px;overflow:hidden;">us-east-1a › us-east-1b</span>
<div class="b" style="left:598px;top:523.5px;width:359px;height:4.5px;background:linear-gradient(180deg,rgba(255,255,255,0),rgba(222,223,230,0.75));border-radius:0 0 3px 3px;"></div>
<div class="b" style="left:598px;top:528px;width:359px;height:3.5px;background:#fff;"></div>
</section><section class="results">
<span class="t " style="left:185.6px;top:549.0px;font-size:9.5px;line-height:11px;color:#2c2c30;letter-spacing:0.238px;-webkit-text-stroke:0.35px #2c2c30;">38 results found</span>
<div class="b" style="left:274.5px;top:544.7px;width:75.2px;height:18.4px;border:1px solid #dbdce2;border-radius:3px;background:#fff;"></div>
<div class="b" style="left:304.7px;top:544.7px;width:1px;height:18.4px;background:#dbdce2;"></div>
<span class="t " style="left:279.5px;top:549.0px;font-size:9.25px;line-height:10px;color:#8a8c94;letter-spacing:0.174px;">Limit</span>
<span class="t " style="left:311.3px;top:549.0px;font-size:8.5px;line-height:10px;color:#2c2c30;letter-spacing:0.273px;">100</span>
<svg style="left:336px;top:552px" width="9" height="5" viewBox="0 0 9 5"><path d="M1.5 0.7H7.5L4.5 4.1Z" fill="#4a4c54"/></svg>
<div class="b" style="left:646.8px;top:546px;width:172.4px;height:15.8px;background:#f8f8fa;border-radius:2px;"></div>
<span class="t " style="left:652.3px;top:549.0px;font-size:9px;line-height:10px;color:#2c2c30;letter-spacing:0.190px;">Last updated: Tue, Nov 26, 2:33:03 pm</span>
<svg style="left:834.8px;top:549px" width="9.4" height="9.4" viewBox="0 0 10 10"><path d="M4.1 0.3H5.9L6.2 1.6L7.2 2.1L8.4 1.4L9.4 2.7L8.6 3.8L8.8 4.9L9.9 5.5L9.5 7.1L8.2 7.2L7.5 8.1L7.8 9.3L6.3 9.9L5.5 8.9H4.5L3.7 9.9L2.2 9.3L2.5 8.1L1.8 7.2L0.5 7.1L0.1 5.5L1.2 4.9L1.4 3.8L0.6 2.7L1.6 1.4L2.8 2.1L3.8 1.6Z" fill="#44464e"/><circle cx="5" cy="5" r="1.7" fill="#fff"/></svg>
<span class="t " style="left:850.0px;top:549.0px;font-size:8.75px;line-height:10px;color:#6a6c74;letter-spacing:0.274px;">Customize</span>
<div class="b" style="left:908.4px;top:545.7px;width:104.5px;height:17px;border:1px solid #dbdce2;border-radius:3px;background:#fff;"></div>
<svg style="left:916.6px;top:549px" width="10.3" height="10" viewBox="0 0 10 10" fill="none" stroke="#55575e" stroke-width="0.9"><path d="M0.7 6.2V9.3H9.3V6.2M5 0.5V6.6M2.7 4.4L5 6.7L7.3 4.4"/></svg>
<span class="t " style="left:931.6px;top:549.0px;font-size:8.5px;line-height:10px;color:#2c2c30;letter-spacing:0.268px;">Download as CSV</span>
<div class="b" style="left:186px;top:575px;width:827px;height:90px;border:1px solid #e8e9ed;border-bottom:none;background:#fff;"></div>
<div class="b" style="left:186px;top:594.3px;width:827px;height:1px;background:#e8e9ed;"></div>
<div class="b" style="left:186px;top:614.3px;width:827px;height:1px;background:#e8e9ed;"></div>
<div class="b" style="left:186px;top:637.2px;width:827px;height:1px;background:#e8e9ed;"></div>
<div class="b" style="left:186px;top:660px;width:827px;height:1px;background:#e8e9ed;"></div>
<div class="b" style="left:649.3px;top:575px;width:1px;height:90px;background:#e8e9ed;"></div>
<div class="b" style="left:808.3px;top:575px;width:1px;height:90px;background:#e8e9ed;"></div>
<div class="b" style="left:967px;top:575px;width:1px;height:90px;background:#e8e9ed;"></div>
<span class="t " style="left:689.4px;top:581.0px;font-size:8.5px;line-height:10px;color:#7a7c84;letter-spacing:-0.271px;">CLIENT</span>
<svg style="left:720.6px;top:582.0px" width="9" height="7" viewBox="0 0 9 7" fill="none" stroke="#7a7c84" stroke-width="0.8"><path d="M0.3 3.5H8.5M5.8 0.8L8.5 3.5L5.8 6.2"/></svg>
<span class="t " style="left:732.6px;top:581.0px;font-size:8.5px;line-height:10px;color:#7a7c84;letter-spacing:0.017px;">SERVER</span>
<span class="t " style="left:848.0px;top:581.0px;font-size:8.5px;line-height:10px;color:#7a7c84;letter-spacing:0.017px;">SERVER</span>
<svg style="left:885.6px;top:582.0px" width="9" height="7" viewBox="0 0 9 7" fill="none" stroke="#7a7c84" stroke-width="0.8"><path d="M0.3 3.5H8.5M5.8 0.8L8.5 3.5L5.8 6.2"/></svg>
<span class="t " style="left:897.5px;top:581.0px;font-size:8.5px;line-height:10px;color:#7a7c84;letter-spacing:-0.271px;">CLIENT</span>
<span class="t " style="left:191.4px;top:600.0px;font-size:8px;line-height:9px;color:#2c2c30;letter-spacing:0.008px;-webkit-text-stroke:0.35px #2c2c30;">CLIENT</span>
<span class="t " style="left:401.7px;top:600.0px;font-size:8px;line-height:9px;color:#2c2c30;letter-spacing:-0.476px;-webkit-text-stroke:0.35px #2c2c30;">SERVER</span>
<svg style="left:690px;top:600px" width="8" height="9" viewBox="0 0 8 9" fill="none" stroke="#3a3c44" stroke-width="0.9"><path d="M4 0.3V8.2M0.8 5L4 8.2L7.2 5"/></svg>
<span class="t " style="left:702.4px;top:601.0px;font-size:8px;line-height:9px;color:#2c2c30;letter-spacing:0.352px;-webkit-text-stroke:0.35px #2c2c30;">VOLUME</span>
<span class="t " style="left:767.9px;top:601.0px;font-size:8px;line-height:9px;color:#2c2c30;letter-spacing:-0.236px;-webkit-text-stroke:0.35px #2c2c30;">PACKETS</span>
<span class="t " style="left:861.8px;top:601.0px;font-size:8px;line-height:9px;color:#2c2c30;letter-spacing:0.285px;-webkit-text-stroke:0.35px #2c2c30;">VOLUME</span>
<span class="t " style="left:926.9px;top:601.0px;font-size:8px;line-height:9px;color:#2c2c30;letter-spacing:-0.293px;-webkit-text-stroke:0.35px #2c2c30;">PACKETS</span>
<span class="t " style="left:991.2px;top:601.0px;font-size:8px;line-height:9px;color:#2c2c30;letter-spacing:-0.420px;-webkit-text-stroke:0.35px #2c2c30;">RETR</span>
<span class="t " style="left:191.4px;top:622.0px;font-size:9.25px;line-height:10px;color:#3a3c44;letter-spacing:0.292px;">northcentralus</span>
<span class="t " style="left:401.7px;top:622.0px;font-size:9.25px;line-height:10px;color:#3a3c44;letter-spacing:0.292px;">northcentralus</span>
<svg style="left:631.6px;top:621.3px" width="8.4" height="9.6" viewBox="0 0 8.4 9.6"><path d="M4.2 0.5L7.8 1.9V4.9C7.8 7 6.3 8.5 4.2 9.2C2.1 8.5 0.6 7 0.6 4.9V1.9Z" fill="#f3f1fc" stroke="#4d3db3" stroke-width="0.95"/><path d="M4.2 0.5V9.2C2.1 8.5 0.6 7 0.6 4.9V1.9Z" fill="#4d3db3" fill-opacity="0.5"/><path d="M4.2 0.5V9.2" stroke="#4d3db3" stroke-width="0.8"/></svg>
<span class="t " style="left:654.3px;top:621.0px;font-size:9px;line-height:10px;color:#2c2c30;font-weight:700;letter-spacing:0.171px;">14.6</span>
<span class="t " style="left:674.4px;top:623.0px;font-size:7px;line-height:7px;color:#6a6c74;letter-spacing:-0.157px;">GB</span>
<span class="t " style="left:691.0px;top:621.0px;font-size:9.5px;line-height:11px;color:#2c2c30;">/</span>
<span class="t " style="left:700.0px;top:621.0px;font-size:9px;line-height:10px;color:#2c2c30;font-weight:700;letter-spacing:-0.029px;">16.2</span>
<span class="t " style="left:719.8px;top:623.0px;font-size:7px;line-height:7px;color:#6a6c74;letter-spacing:0.639px;">MB/s</span>
<span class="t " style="left:779.0px;top:621.0px;font-size:9px;line-height:10px;color:#2c2c30;font-weight:700;letter-spacing:0.372px;">338M</span>
<span class="t " style="left:813.7px;top:621.0px;font-size:9px;line-height:10px;color:#2c2c30;font-weight:700;letter-spacing:-0.054px;">16.0</span>
<span class="t " style="left:833.4px;top:623.0px;font-size:7px;line-height:7px;color:#6a6c74;letter-spacing:-0.107px;">GB</span>
<span class="t " style="left:850.0px;top:621.0px;font-size:9.5px;line-height:11px;color:#2c2c30;">/</span>
<span class="t " style="left:858.7px;top:621.0px;font-size:9px;line-height:10px;color:#2c2c30;font-weight:700;letter-spacing:0.046px;">17.8</span>
<span class="t " style="left:878.4px;top:623.0px;font-size:7px;line-height:7px;color:#6a6c74;letter-spacing:0.739px;">MB/s</span>
<span class="t " style="left:937.6px;top:621.0px;font-size:9px;line-height:10px;color:#2c2c30;font-weight:700;letter-spacing:0.372px;">382M</span>
<span class="t " style="left:191.4px;top:645.0px;font-size:9.25px;line-height:10px;color:#3a3c44;letter-spacing:-0.028px;">us-east-1c</span>
<span class="t " style="left:401.7px;top:645.0px;font-size:9.25px;line-height:10px;color:#3a3c44;letter-spacing:-0.028px;">us-east-1c</span>
<svg style="left:631.6px;top:644.6px" width="8.4" height="9.6" viewBox="0 0 8.4 9.6"><path d="M4.2 0.5L7.8 1.9V4.9C7.8 7 6.3 8.5 4.2 9.2C2.1 8.5 0.6 7 0.6 4.9V1.9Z" fill="#f3f1fc" stroke="#4d3db3" stroke-width="0.95"/><path d="M4.2 0.5V9.2C2.1 8.5 0.6 7 0.6 4.9V1.9Z" fill="#4d3db3" fill-opacity="0.5"/><path d="M4.2 0.5V9.2" stroke="#4d3db3" stroke-width="0.8"/></svg>
<span class="t " style="left:654.3px;top:645.0px;font-size:9px;line-height:10px;color:#2c2c30;font-weight:700;letter-spacing:0.171px;">2.76</span>
<span class="t " style="left:674.4px;top:647.0px;font-size:7px;line-height:7px;color:#6a6c74;letter-spacing:-0.157px;">GB</span>
<span class="t " style="left:691.0px;top:644.0px;font-size:9.5px;line-height:11px;color:#2c2c30;">/</span>
<span class="t " style="left:700.0px;top:645.0px;font-size:9px;line-height:10px;color:#2c2c30;font-weight:700;letter-spacing:-0.029px;">3.07</span>
<span class="t " style="left:719.8px;top:647.0px;font-size:7px;line-height:7px;color:#6a6c74;letter-spacing:0.639px;">MB/s</span>
<span class="t " style="left:776.6px;top:645.0px;font-size:9px;line-height:10px;color:#2c2c30;font-weight:700;letter-spacing:0.278px;">24.9M</span>
<span class="t " style="left:813.7px;top:645.0px;font-size:9px;line-height:10px;color:#2c2c30;font-weight:700;letter-spacing:-0.054px;">3.06</span>
<span class="t " style="left:833.4px;top:647.0px;font-size:7px;line-height:7px;color:#6a6c74;letter-spacing:-0.107px;">GB</span>
<span class="t " style="left:850.0px;top:644.0px;font-size:9.5px;line-height:11px;color:#2c2c30;">/</span>
<span class="t " style="left:858.7px;top:645.0px;font-size:9px;line-height:10px;color:#2c2c30;font-weight:700;letter-spacing:0.046px;">3.40</span>
<span class="t " style="left:878.4px;top:647.0px;font-size:7px;line-height:7px;color:#6a6c74;letter-spacing:0.739px;">MB/s</span>
<span class="t " style="left:935.6px;top:645.0px;font-size:9px;line-height:10px;color:#2c2c30;font-weight:700;letter-spacing:0.198px;">19.9M</span>
<div class="b" style="left:1000px;top:575px;width:13px;height:86px;background:linear-gradient(90deg,rgba(255,255,255,0),rgba(225,226,232,0.55));"></div>
</section><section class="sunburst">
<svg style="left:0;top:0" width="1024" height="661" viewBox="0 0 1024 661"><g stroke="#fff" stroke-width="1.05" stroke-linejoin="round"><path d="M393.60 287.60A82.1 82.1 0 0 1 411.37 449.85L402.58 410.22A41.5 41.5 0 0 0 393.60 328.20Z" fill="#3e2995"/><path d="M411.37 449.85A82.1 82.1 0 0 1 392.88 451.80L393.24 411.20A41.5 41.5 0 0 0 402.58 410.22Z" fill="#c6cadd"/><path d="M392.88 451.80A82.1 82.1 0 0 1 386.16 451.46L389.84 411.03A41.5 41.5 0 0 0 393.24 411.20Z" fill="#d9cefd"/><path d="M386.16 451.46A82.1 82.1 0 0 1 378.36 450.37L385.89 410.48A41.5 41.5 0 0 0 389.84 411.03Z" fill="#c9b8fb"/><path d="M378.36 450.37A82.1 82.1 0 0 1 367.41 447.51L380.36 409.03A41.5 41.5 0 0 0 385.89 410.48Z" fill="#bca8f8"/><path d="M367.41 447.51A82.1 82.1 0 0 1 345.11 435.95L369.09 403.19A41.5 41.5 0 0 0 380.36 409.03Z" fill="#987ded"/><path d="M345.11 435.95A82.1 82.1 0 0 1 326.35 416.79L359.61 393.50A41.5 41.5 0 0 0 369.09 403.19Z" fill="#8a6fe8"/><path d="M326.35 416.79A82.1 82.1 0 0 1 312.67 383.53L352.69 376.69A41.5 41.5 0 0 0 359.61 393.50Z" fill="#7e62e2"/><path d="M312.67 383.53A82.1 82.1 0 0 1 315.74 343.65L354.24 356.53A41.5 41.5 0 0 0 352.69 376.69Z" fill="#674bd0"/><path d="M315.74 343.65A82.1 82.1 0 0 1 343.73 304.48L368.39 336.73A41.5 41.5 0 0 0 354.24 356.53Z" fill="#5e44c7"/><path d="M343.73 304.48A82.1 82.1 0 0 1 393.60 287.60L393.60 328.20A41.5 41.5 0 0 0 368.39 336.73Z" fill="#5139b7"/><path d="M393.60 246.60A123.1 123.1 0 0 1 420.24 489.88L411.37 449.85A82.1 82.1 0 0 0 393.60 287.60Z" fill="#3e2995"/><path d="M391.02 492.77A123.1 123.1 0 0 1 381.16 492.17L385.30 451.38A82.1 82.1 0 0 0 391.88 451.78Z" fill="#d9cefd"/><path d="M381.16 492.17A123.1 123.1 0 0 1 370.96 490.70L378.50 450.40A82.1 82.1 0 0 0 385.30 451.38Z" fill="#c9b8fb"/><path d="M370.96 490.70A123.1 123.1 0 0 1 362.78 488.88L373.04 449.18A82.1 82.1 0 0 0 378.50 450.40Z" fill="#ad96f4"/><path d="M362.78 488.88A123.1 123.1 0 0 1 354.13 486.30L367.28 447.47A82.1 82.1 0 0 0 373.04 449.18Z" fill="#bca8f8"/><path d="M354.13 486.30A123.1 123.1 0 0 1 347.09 483.67L362.58 445.71A82.1 82.1 0 0 0 367.28 447.47Z" fill="#c6cadd"/><path d="M347.09 483.67A123.1 123.1 0 0 1 320.90 469.04L345.11 435.95A82.1 82.1 0 0 0 362.58 445.71Z" fill="#987ded"/><path d="M320.90 469.04A123.1 123.1 0 0 1 315.30 464.69L341.38 433.05A82.1 82.1 0 0 0 345.11 435.95Z" fill="#8a6fe8"/><path d="M315.30 464.69A123.1 123.1 0 0 1 309.33 459.44L337.40 429.55A82.1 82.1 0 0 0 341.38 433.05Z" fill="#8a6fe8"/><path d="M309.33 459.44A123.1 123.1 0 0 1 292.76 440.31L326.35 416.79A82.1 82.1 0 0 0 337.40 429.55Z" fill="#8a6fe8"/><path d="M292.76 440.31A123.1 123.1 0 0 1 289.32 435.12L324.05 413.33A82.1 82.1 0 0 0 326.35 416.79Z" fill="#c6cadd"/><path d="M289.32 435.12A123.1 123.1 0 0 1 272.26 390.44L312.67 383.53A82.1 82.1 0 0 0 324.05 413.33Z" fill="#7e62e2"/><path d="M272.26 390.44A123.1 123.1 0 0 1 271.34 384.06L312.06 379.28A82.1 82.1 0 0 0 312.67 383.53Z" fill="#c6cadd"/><path d="M271.34 384.06A123.1 123.1 0 0 1 276.86 330.64L315.74 343.65A82.1 82.1 0 0 0 312.06 379.28Z" fill="#674bd0"/><path d="M276.86 330.64A123.1 123.1 0 0 1 277.35 329.22L316.07 342.70A82.1 82.1 0 0 0 315.74 343.65Z" fill="#5e44c7"/><path d="M277.35 329.22A123.1 123.1 0 0 1 277.92 327.60L316.45 341.62A82.1 82.1 0 0 0 316.07 342.70Z" fill="#5e44c7"/><path d="M277.92 327.60A123.1 123.1 0 0 1 279.63 323.19L317.59 338.68A82.1 82.1 0 0 0 316.45 341.62Z" fill="#5e44c7"/><path d="M279.63 323.19A123.1 123.1 0 0 1 282.96 315.74L319.81 333.71A82.1 82.1 0 0 0 317.59 338.68Z" fill="#5e44c7"/><path d="M282.96 315.74A123.1 123.1 0 0 1 318.83 271.91L343.73 304.48A82.1 82.1 0 0 0 319.81 333.71Z" fill="#5e44c7"/><path d="M318.83 271.91A123.1 123.1 0 0 1 328.73 265.08L350.34 299.92A82.1 82.1 0 0 0 343.73 304.48Z" fill="#5139b7"/><path d="M328.73 265.08A123.1 123.1 0 0 1 393.60 246.60L393.60 287.60A82.1 82.1 0 0 0 350.34 299.92Z" fill="#5139b7"/></g><g fill="none" stroke-width="1"><path stroke="#5139b7" d="M266.8 243.2H356.5L359 248"/><path stroke="#5e44c7" d="M208.4 284.3H288L295.6 290.6"/><path stroke="#674bd0" d="M208.4 355.8H263L268.5 357.6"/><path stroke="#3e2995" d="M516.5 356.8L519 355.8H578.4"/><path stroke="#7e62e2" d="M207.9 418.3H267.7L275.4 415.2"/><path stroke="#987ded" d="M217.7 486.2H327L331.3 480.8"/></g></svg>
<span class="t " style="left:367.8px;top:353.0px;font-size:20.5px;line-height:23px;color:#222226;letter-spacing:0.040px;-webkit-text-stroke:0.5px #222226;">29.16</span>
<span class="t " style="left:384.2px;top:378.0px;font-size:11px;line-height:12px;color:#3a3c44;letter-spacing:0.121px;">GiB</span>
<span class="t halo" style="left:266.8px;top:229.0px;font-size:9.5px;line-height:11px;color:#4e5058;letter-spacing:-0.119px;">us-east-1c › us-east-1c</span>
<span class="t halo" style="left:266.8px;top:246.0px;font-size:9px;line-height:10px;color:#222226;font-weight:700;letter-spacing:0.064px;">2.57 GiB • 8.8 %</span>
<span class="t halo" style="left:208.4px;top:271.0px;font-size:9.5px;line-height:11px;color:#4e5058;letter-spacing:-0.023px;">us-central1-c › us-central1-c</span>
<span class="t halo" style="left:208.4px;top:289.0px;font-size:9px;line-height:10px;color:#222226;font-weight:700;letter-spacing:0.008px;">2.15 GiB • 7.4 %</span>
<span class="t halo" style="left:208.4px;top:342.0px;font-size:9.5px;line-height:11px;color:#4e5058;letter-spacing:-0.025px;">us-central1-a › us-central1-a</span>
<span class="t halo" style="left:208.4px;top:360.0px;font-size:9px;line-height:10px;color:#222226;font-weight:700;letter-spacing:-0.005px;">2.05 GiB • 7 %</span>
<span class="t halo" style="left:444.6px;top:342.0px;font-size:9.5px;line-height:11px;color:#4e5058;letter-spacing:0.160px;">northcentralus › northcentralus</span>
<span class="t halo" style="left:500.5px;top:360.0px;font-size:9px;line-height:10px;color:#222226;font-weight:700;letter-spacing:0.040px;">13.57 GiB • 46.5 %</span>
<span class="t halo" style="left:207.9px;top:422.0px;font-size:9.5px;line-height:11px;color:#4e5058;letter-spacing:-0.078px;">us-east-1a › us-east-1a</span>
<span class="t halo" style="left:207.9px;top:405.0px;font-size:9px;line-height:10px;color:#222226;font-weight:700;letter-spacing:0.033px;">1.86 GiB • 6.4 %</span>
<span class="t halo" style="left:217.7px;top:490.0px;font-size:9.5px;line-height:11px;color:#4e5058;letter-spacing:-0.015px;">us-central1-f › us-central1-f</span>
<span class="t halo" style="left:217.7px;top:473.0px;font-size:9px;line-height:10px;color:#222226;font-weight:700;letter-spacing:-0.017px;">1.15 GiB • 3.9 %</span>
</section></main>
</body></html>
